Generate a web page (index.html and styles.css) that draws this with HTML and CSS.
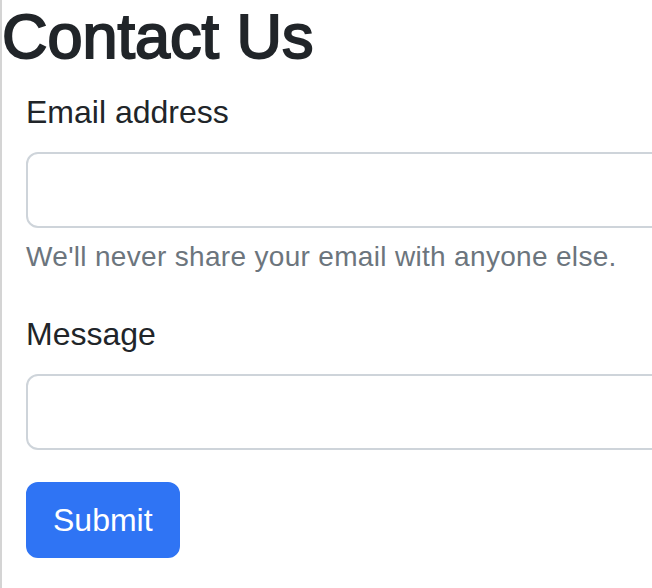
FILE: index.html
```html
<!DOCTYPE html>
<html lang="en">
<head>
<meta charset="utf-8">
<title>Contact Us</title>
<link rel="stylesheet" href="styles.css">
</head>
<body>
<h1 class="title">Contact Us</h1>
<form class="contact-form">
  <div class="field">
    <label class="field-label" for="email">Email address</label>
    <input class="field-input" id="email" type="email">
    <div class="field-help">We'll never share your email with anyone else.</div>
  </div>
  <div class="field">
    <label class="field-label" for="message">Message</label>
    <input class="field-input" id="message" type="text">
  </div>
  <button class="submit-btn" type="submit">Submit</button>
</form>
</body>
</html>
```
FILE: styles.css
```css
html, body {
  margin: 0;
  padding: 0;
  background: #ffffff;
}
body {
  border-left: 2px solid #d4d4d4;
  min-height: 588px;
  box-sizing: border-box;
  overflow: hidden;
  font-family: "Liberation Sans", Arial, sans-serif;
  color: #212529;
}
.title {
  margin: 0 0 16px 0;
  font-size: 63px;
  font-weight: 400;
  line-height: 72px;
  color: #212529;
  -webkit-text-stroke: 2px #212529;
}
.contact-form {
  padding-left: 24px;
  display: flex;
  flex-direction: column;
  align-items: flex-start;
}
.field {
  display: flex;
  flex-direction: column;
  margin-bottom: 32px;
  width: 680px;
}
.field-label {
  font-size: 32px;
  line-height: 48px;
  margin-bottom: 16px;
  color: #212529;
}
.field-input {
  box-sizing: border-box;
  height: 76px;
  width: 100%;
  border: 2px solid #ced4da;
  border-radius: 12px;
  padding: 12px 24px;
  font-size: 32px;
  font-family: inherit;
  background: #fff;
  outline: none;
}
.field-help {
  margin-top: 8px;
  font-size: 28px;
  line-height: 42px;
  letter-spacing: 0.32px;
  color: #6c757d;
}
.submit-btn {
  box-sizing: border-box;
  height: 76px;
  padding: 12px 25px;
  border: 2px solid #2f74f4;
  border-radius: 12px;
  background: #2f74f4;
  color: #ffffff;
  font-family: inherit;
  font-size: 32px;
  line-height: 48px;
}
```
